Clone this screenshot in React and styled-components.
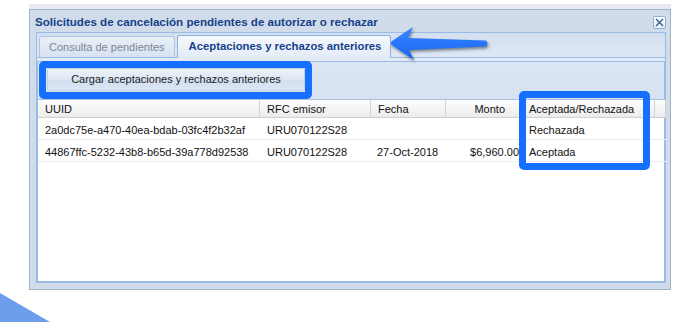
import React from "react";
import styled, { createGlobalStyle } from "styled-components";

const GlobalStyle = createGlobalStyle`
  html, body { margin: 0; padding: 0; background: #ffffff; }
  * { box-sizing: border-box; }
`;

const Page = styled.div`
  position: relative;
  width: 678px;
  height: 322px;
  overflow: hidden;
  background: #ffffff;
  padding-top: 4px;
`;

const BackStrip = styled.div`
  margin-left: 29px;
  width: 642px;
  height: 5px;
  background: #e7eaef;
`;

const Window = styled.div`
  margin-left: 29px;
  width: 642px;
  height: 281px;
  border: 1px solid #a2b0c2;
  background: #d1dcea;
  display: flex;
  flex-direction: column;
  padding: 0 4px 6px 6px;
`;

const TitleBar = styled.div`
  height: 22px;
  display: flex;
  align-items: flex-start;
  justify-content: space-between;
  margin-left: -1px;
`;

const Title = styled.div`
  font-family: "Liberation Sans", Arial, sans-serif;
  font-weight: bold;
  font-size: 11.6px;
  line-height: 22px;
  padding-top: 1px;
  color: #15428b;
  white-space: nowrap;
`;

const CloseButton = styled.div`
  width: 13px;
  height: 13px;
  margin-top: 6px;
  border: 1px solid #8fb0dc;
  border-radius: 2px;
  background: linear-gradient(#ffffff, #e4ecf7);
  display: flex;
  align-items: center;
  justify-content: center;
`;

const TabPanel = styled.div`
  flex: 1;
  display: flex;
  flex-direction: column;
`;

const TabStrip = styled.div`
  height: 25px;
  border: 1px solid #99bbe8;
  border-bottom: none;
  background: linear-gradient(#d3dfef, #dfe8f5);
  display: flex;
  align-items: flex-end;
  gap: 2px;
  padding-left: 2px;
`;

const Tab = styled.div`
  position: relative;
  height: ${(p) => (p.$active ? "23px" : "21px")};
  margin-bottom: ${(p) => (p.$active ? "-1px" : "0")};
  padding: ${(p) => (p.$active ? "0 9px 0 11px" : "0 9px")};
  border: 1px solid ${(p) => (p.$active ? "#8db2e3" : "#aac3e3")};
  border-bottom: none;
  border-radius: 3px 3px 0 0;
  background: ${(p) =>
    p.$active
      ? "linear-gradient(#f6f9fd, #e3ebf7)"
      : "linear-gradient(#e9eff8, #d7e2f1)"};
  font-family: "Liberation Sans", Arial, sans-serif;
  font-size: ${(p) => (p.$active ? "11.3px" : "11px")};
  font-weight: ${(p) => (p.$active ? "bold" : "normal")};
  color: ${(p) => (p.$active ? "#15428b" : "#7d8898")};
  line-height: ${(p) => (p.$active ? "21px" : "20px")};
  white-space: nowrap;
  z-index: 1;
`;

const StripSpacer = styled.div`
  height: 5px;
  border: 1px solid #99bbe8;
  background: #e2eaf6;
`;

const TabBody = styled.div`
  flex: 1;
  border: 2px solid #99bbe8;
  border-top: none;
  background: #ffffff;
  display: flex;
  flex-direction: column;
`;

const Toolbar = styled.div`
  height: 38px;
  border-bottom: 1px solid #a9c0df;
  background: linear-gradient(#dbe5f3, #d6e2f2);
  padding: 6px 0 0 9px;
`;

const Button = styled.div`
  width: 258px;
  height: 23px;
  border: 1px solid #c3d3ea;
  border-radius: 2px;
  background: linear-gradient(#eef3fa, #dce6f4 50%, #d2dff0 51%, #dbe5f3);
  font-family: "Liberation Sans", Arial, sans-serif;
  font-size: 11px;
  line-height: 21px;
  color: #222;
  text-align: center;
`;

const Grid = styled.div`
  display: grid;
  grid-template-columns: 222px 111px 75px 76px 133px 1fr;
  font-family: "Liberation Sans", Arial, sans-serif;
  font-size: 11px;
  color: #111;
`;

const HeaderCell = styled.div`
  height: 18px;
  line-height: 18px;
  padding: 0 ${(p) => (p.$right ? "16px" : "3px")} 0 7px;
  text-align: ${(p) => (p.$right ? "right" : "left")};
  background: linear-gradient(#fdfdfd, #ececec);
  border-right: 1px solid #d3d3d3;
  border-bottom: 1px solid #d0d0d0;
  white-space: nowrap;
  overflow: hidden;
`;

const Cell = styled.div`
  height: 22px;
  line-height: 24px;
  padding: 0 3px 0 ${(p) => (p.$pad ? p.$pad : 7)}px;
  text-align: ${(p) => (p.$right ? "right" : "left")};
  border-bottom: 1px solid #ededed;
  white-space: nowrap;
  overflow: hidden;
`;

const Highlight = styled.div`
  position: absolute;
  left: ${(p) => p.$x}px;
  top: ${(p) => p.$y}px;
  width: ${(p) => p.$w}px;
  height: ${(p) => p.$h}px;
  border: 7px solid #176fff;
  border-radius: 5px;
  pointer-events: none;
`;

const ArrowSvg = styled.svg`
  position: absolute;
  left: 380px;
  top: 20px;
  filter: drop-shadow(1px 2px 1.5px rgba(0, 0, 0, 0.45));
`;

const CornerSvg = styled.svg`
  position: absolute;
  left: 0;
  top: 290px;
`;

const rows = [
  {
    uuid: "2a0dc75e-a470-40ea-bdab-03fc4f2b32af",
    rfc: "URU070122S28",
    fecha: "",
    monto: "",
    estado: "Rechazada",
  },
  {
    uuid: "44867ffc-5232-43b8-b65d-39a778d92538",
    rfc: "URU070122S28",
    fecha: "27-Oct-2018",
    monto: "$6,960.00",
    estado: "Aceptada",
  },
];

export default function App() {
  return (
    <Page>
      <GlobalStyle />
      <BackStrip />
      <Window>
        <TitleBar>
          <Title>Solicitudes de cancelación pendientes de autorizar o rechazar</Title>
          <CloseButton>
            <svg width="9" height="9" viewBox="0 0 9 9">
              <path d="M1 1 L8 8 M8 1 L1 8" stroke="#3c5a86" strokeWidth="1.4" />
            </svg>
          </CloseButton>
        </TitleBar>
        <TabPanel>
          <TabStrip>
            <Tab>Consulta de pendientes</Tab>
            <Tab $active>Aceptaciones y rechazos anteriores</Tab>
          </TabStrip>
          <StripSpacer />
          <TabBody>
            <Toolbar>
              <Button>Cargar aceptaciones y rechazos anteriores</Button>
            </Toolbar>
            <Grid>
              <HeaderCell>UUID</HeaderCell>
              <HeaderCell>RFC emisor</HeaderCell>
              <HeaderCell>Fecha</HeaderCell>
              <HeaderCell $right>Monto</HeaderCell>
              <HeaderCell>Aceptada/Rechazada</HeaderCell>
              <HeaderCell />
              {rows.map((r) => (
                <React.Fragment key={r.uuid}>
                  <Cell>{r.uuid}</Cell>
                  <Cell>{r.rfc}</Cell>
                  <Cell $pad={6}>{r.fecha}</Cell>
                  <Cell $right>{r.monto}</Cell>
                  <Cell>{r.estado}</Cell>
                  <Cell />
                </React.Fragment>
              ))}
            </Grid>
          </TabBody>
        </TabPanel>
      </Window>

      <Highlight $x={39} $y={61} $w={273} $h={38} />
      <Highlight $x={519} $y={91} $w={131} $h={79} />

      <ArrowSvg width="115" height="48" viewBox="380 20 115 48">
        <defs>
          <linearGradient id="arrowFill" x1="0" y1="0" x2="0" y2="1">
            <stop offset="0" stopColor="#3a86ff" />
            <stop offset="1" stopColor="#1565f5" />
          </linearGradient>
        </defs>
        <path
          d="M389 43 L413 27 L408 38 L486 40.5 Q489 43.5 486 46.5 L409 50 L414 60 Z"
          fill="url(#arrowFill)"
        />
      </ArrowSvg>

      <CornerSvg width="60" height="32" viewBox="0 290 60 32">
        <path d="M0 293 L50 322 L0 322 Z" fill="#6b9eec" />
      </CornerSvg>
    </Page>
  );
}
